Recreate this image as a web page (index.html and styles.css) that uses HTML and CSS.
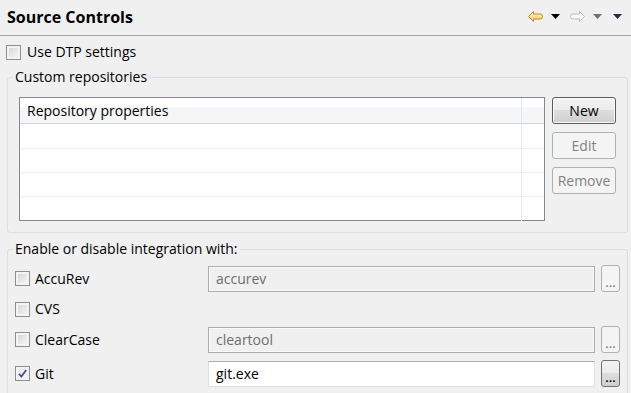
FILE: index.html
```html
<!DOCTYPE html>
<html lang="en">
<head>
  <meta charset="UTF-8" />
  <title>Source Controls</title>
  <link rel="stylesheet" href="styles.css">
</head>
<body>
  <div class="header">
    <h1 class="title">Source Controls</h1>
    <div class="nav">
      <svg class="arrow" width="15" height="11" viewBox="0 0 15 11">
        <defs>
          <linearGradient id="gold" x1="0" y1="0" x2="0" y2="1">
            <stop offset="0" stop-color="#fff6cf"/>
            <stop offset="1" stop-color="#f6c75a"/>
          </linearGradient>
        </defs>
        <path d="M0.5 5.5 L5.5 0.5 L5.5 3 L12.5 3 Q14.5 3 14.5 5.5 Q14.5 8 12.5 8 L5.5 8 L5.5 10.5 Z" fill="url(#gold)" stroke="#c88a22"/>
      </svg>
      <svg class="tri" width="9" height="5" viewBox="0 0 9 5"><path d="M0 0 H9 L4.5 5 Z" fill="#000"/></svg>
      <svg class="arrow fwd" width="15" height="11" viewBox="0 0 15 11">
        <path d="M14.5 5.5 L9.5 0.5 L9.5 3 L2.5 3 Q0.5 3 0.5 5.5 Q0.5 8 2.5 8 L9.5 8 L9.5 10.5 Z" fill="#f7f7f7" stroke="#bdbdbd"/>
      </svg>
      <svg class="tri" width="9" height="5" viewBox="0 0 9 5"><path d="M0 0 H9 L4.5 5 Z" fill="#6f6f6f"/></svg>
      <svg class="tri last" width="9" height="5" viewBox="0 0 9 5"><path d="M0 0 H9 L4.5 5 Z" fill="#2e2356"/></svg>
    </div>
  </div>

  <label class="check dtp"><span class="box"></span>Use DTP settings</label>

  <fieldset class="group repos">
    <legend>Custom repositories</legend>
    <div class="repo-body">
      <div class="table">
        <div class="trow thead"><div class="cell">Repository properties</div><div class="cell"></div></div>
        <div class="trow"><div class="cell"></div><div class="cell"></div></div>
        <div class="trow"><div class="cell"></div><div class="cell"></div></div>
        <div class="trow"><div class="cell"></div><div class="cell"></div></div>
        <div class="trow"><div class="cell"></div><div class="cell"></div></div>
      </div>
      <div class="buttons">
        <button class="btn default">New</button>
        <button class="btn" disabled>Edit</button>
        <button class="btn" disabled>Remove</button>
      </div>
    </div>
  </fieldset>

  <fieldset class="group tools">
    <legend>Enable or disable integration with:</legend>
    <div class="tool-grid">
      <label class="check"><span class="box"></span>AccuRev</label>
      <input class="field" type="text" value="accurev" disabled />
      <button class="dots" disabled>...</button>

      <label class="check cvs"><span class="box"></span>CVS</label>

      <label class="check"><span class="box"></span>ClearCase</label>
      <input class="field" type="text" value="cleartool" disabled />
      <button class="dots" disabled>...</button>

      <label class="check"><span class="box checked"><svg width="11" height="11" viewBox="0 0 11 11"><path d="M2 5.8 L4.4 8.6 L9.2 2" fill="none" stroke="#3f5596" stroke-width="1.8"/></svg></span>Git</label>
      <input class="field" type="text" value="git.exe" />
      <button class="dots on">...</button>
    </div>
  </fieldset>
</body>
</html>
```

FILE: styles.css
```css
* {
  box-sizing: border-box;
}

body {
  margin: 0;
  background: #f0f0f0;
  font-family: 'Open Sans', sans-serif;
  font-size: 14px;
  color: #000;
  overflow: hidden;
}

/* page header */
.header {
  display: flex;
  align-items: center;
  justify-content: space-between;
  height: 36px;
  padding: 0 9px 1px 7px;
  border-bottom: 1px solid #a0a0a0;
}

.title {
  margin: 0;
  font-size: 16px;
  font-weight: bold;
}

.nav {
  display: flex;
  align-items: center;
  margin-top: -1px;
}

.nav svg {
  display: block;
}

.nav .tri {
  margin-left: 8px;
}

.nav .fwd {
  margin-left: 10px;
}

.nav .last {
  margin-left: 11px;
}

/* checkboxes */
.check {
  display: flex;
  align-items: center;
  gap: 5px;
  line-height: 18px;
}

.box {
  width: 15px;
  height: 15px;
  flex: none;
  border: 1px solid #8e8f8f;
  background: linear-gradient(135deg, #d2d2d2, #fafafa);
  box-shadow: inset 0 0 0 2px #f3f3f3;
  display: flex;
  align-items: center;
  justify-content: center;
}

.box.checked {
  background: linear-gradient(135deg, #e2e2e2, #fcfcfc);
}

.dtp {
  margin: 7px 0 0 6px;
  gap: 6px;
}

/* group boxes */
.group {
  margin: 7px 3px 0 7px;
  border: 1px solid #d5dfe5;
  border-radius: 3px;
  min-width: 0;
}

.group legend {
  padding: 0 2px;
  line-height: 18px;
}

.repos {
  padding: 11px 11px 11px 11px;
}

.repos legend {
  margin-left: -6px;
}

.repo-body {
  display: flex;
  gap: 7px;
}

.table {
  flex: 1;
  height: 124px;
  border: 1px solid #828790;
  background: #fff;
}

.trow {
  display: grid;
  grid-template-columns: 502px 1fr;
  height: 24px;
  border-bottom: 1px solid #f0f0f0;
}

.trow .cell:first-child {
  border-right: 1px solid #e6ebf1;
}

.thead {
  height: 26px;
  border-bottom: 1px solid #d5d5d5;
  background: linear-gradient(#fff 0, #fff 35%, #f5f6f7 35%, #f5f6f7 100%);
}

.thead .cell {
  padding: 3px 7px 0;
  line-height: 20px;
}

.thead .cell:first-child {
  border-right-color: #e3e5e8;
}

.trow:nth-child(2) {
  height: 25px;
}

.trow:last-child {
  border-bottom: none;
}

.buttons {
  display: flex;
  flex-direction: column;
  gap: 8px;
  width: 64px;
}

.btn,
.dots {
  font-family: inherit;
  font-size: 14px;
  color: #000;
  border: 1px solid #707070;
  border-radius: 3px;
  background: linear-gradient(#f2f2f2 0, #ebebeb 50%, #dddddd 50%, #cfcfcf 100%);
  padding: 0;
}

.btn {
  height: 27px;
}

.btn.default {
  border-color: #5a5a5a;
  box-shadow: inset 0 0 0 1px #fcfcfc;
}

.btn:disabled,
.dots:disabled {
  color: #838383;
  border-color: #adb2b5;
  background: #f4f4f4;
}

/* integrations */
.tools {
  padding: 7px 7px 20px 7px;
}

.tools legend {
  margin-left: -2px;
}

.tool-grid {
  display: grid;
  grid-template-columns: 187px 1fr 19px;
  grid-template-rows: 27px 20px 27px 27px;
  column-gap: 6px;
  row-gap: 7px;
  align-items: center;
}

.cvs {
  grid-column: 1 / -1;
}

.field {
  height: 26px;
  width: 100%;
  font-family: inherit;
  font-size: 14px;
  color: #000;
  padding: 0 7px;
  border: 1px solid #dbdfe6;
  border-top-color: #abadb3;
  background: #fff;
  outline: none;
}

.field:disabled {
  color: #6d6d6d;
  background: #f0f0f0;
  border-color: #adadad;
  box-shadow: inset 0 0 0 1px #f9f9f9;
}

.dots {
  height: 27px;
  font-family: 'DejaVu Sans', sans-serif;
  font-size: 9px;
  font-weight: bold;
  line-height: 1;
  padding-top: 11px;
  letter-spacing: 0;
}

.dots.on {
  border-color: #707070;
}
```
